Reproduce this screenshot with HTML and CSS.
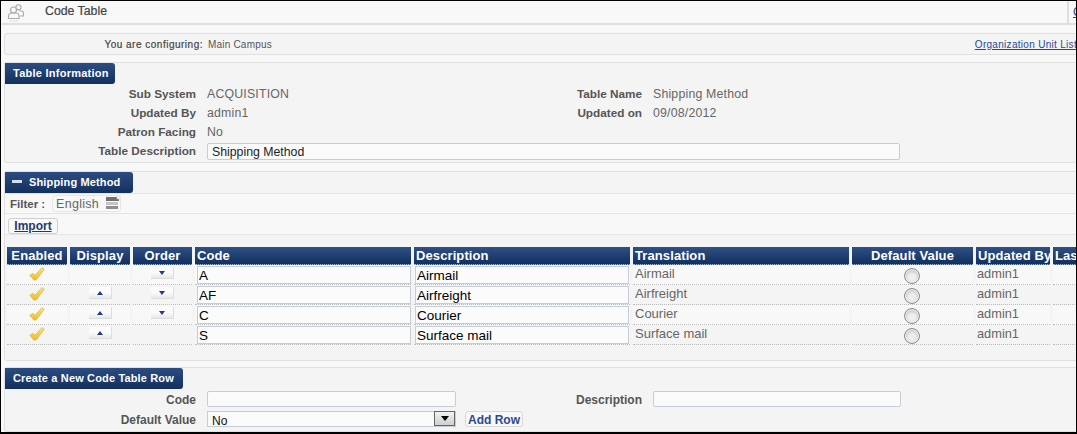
FILE: index.html
```html
<!DOCTYPE html>
<html lang="en">
<head>
<meta charset="utf-8">
<title>Code Table</title>
<link rel="stylesheet" href="styles.css">
</head>
<body>
<svg class="defs" width="0" height="0" aria-hidden="true">
  <defs>
    <linearGradient id="checkFill" x1="0" y1="0" x2="0" y2="1">
      <stop offset="0" stop-color="#fbe66a"/>
      <stop offset="1" stop-color="#eeb92a"/>
    </linearGradient>
    <symbol id="check" viewBox="0 0 16 14">
      <path d="M.7 8.300 3.800 6.300 6 8.300 12.800.7 15.300 2.300 7.300 12.800 5 13.300z" fill="url(#checkFill)" stroke="#d3ad45" stroke-width=".6"/>
    </symbol>
  </defs>
</svg>
<div class="frame">
  <header class="topbar">
    <svg class="top-icon" width="17" height="20" viewBox="0 0 17 20" fill="none" stroke="#aaa" stroke-width="1.100">
      <circle cx="6.500" cy="7" r="3"/><circle cx="11.500" cy="4.300" r="2.600"/>
      <path d="M1.500 15.500v-2.500c0-2 2-3 3-3h4.500c1 0 3 1 3 3v2.500z"/>
      <path d="M12.500 8h2c1 0 2 1 2 2.500V13h-3.500"/>
      <path d="M2.500 18h9" stroke="#e2e2e2"/>
    </svg>
    <h1 class="top-title">Code Table</h1>
    <div class="top-right"><a class="link" href="#">Organization</a></div>
  </header>

  <div class="config">
    <span class="config-label">You are configuring:</span>
    <span class="config-value">Main Campus</span>
    <a class="link config-link" href="#">Organization Unit List</a>
  </div>

  <section class="section section-info">
    <h2 class="bar bar-info">Table Information</h2>
    <div class="form">
      <span class="label">Sub System</span><span class="value">ACQUISITION</span>
      <span class="label">Table Name</span><span class="value">Shipping Method</span>
      <span class="label">Updated By</span><span class="value">admin1</span>
      <span class="label">Updated on</span><span class="value">09/08/2012</span>
      <span class="label">Patron Facing</span><span class="value">No</span>
      <span></span><span></span>
      <span class="label">Table Description</span>
      <input class="field field-wide" type="text" value="Shipping Method">
    </div>
  </section>

  <section class="section section-table">
    <h2 class="bar bar-ship"><span class="minus"></span>Shipping Method</h2>
    <div class="filter">
      <span class="filter-label">Filter :</span>
      <span class="filter-box">English
        <svg class="filter-icon" width="14" height="15" viewBox="0 0 14 15">
          <rect x="0" y="1" width="13" height="4" fill="#6f6f6f"/>
          <rect x="0" y="6" width="12" height="3" fill="#c4c4c4"/>
          <rect x="0" y="10" width="12" height="3" fill="#8f8f8f"/>
          <rect x="11" y="0" width="3" height="3" fill="#fff" stroke="#bbb" stroke-width=".5"/>
        </svg>
      </span>
    </div>
    <div class="import-row"><button class="btn btn-import" type="button">Import</button></div>

    <div class="grid head">
      <div class="th center">Enabled</div>
      <div class="th center">Display</div>
      <div class="th center">Order</div>
      <div class="th">Code</div>
      <div class="th">Description</div>
      <div class="th">Translation</div>
      <div class="th center">Default Value</div>
      <div class="th">Updated By</div>
      <div class="th">Last Updated</div>
    </div>

    <div class="grid row">
      <div class="td center"><svg class="check" width="16" height="14"><use href="#check"/></svg></div>
      <div class="td"></div>
      <div class="td center"><button class="arrow" type="button"><span class="tri-down"></span></button></div>
      <div class="td"><input class="cell-input" type="text" value="A"></div>
      <div class="td td-desc"><input class="cell-input" type="text" value="Airmail"></div>
      <div class="td text">Airmail</div>
      <div class="td center"><span class="radio"></span></div>
      <div class="td text td-user">admin1</div>
      <div class="td"></div>
    </div>
    <div class="grid row alt">
      <div class="td center"><svg class="check" width="16" height="14"><use href="#check"/></svg></div>
      <div class="td center"><button class="arrow" type="button"><span class="tri-up"></span></button></div>
      <div class="td center"><button class="arrow" type="button"><span class="tri-down"></span></button></div>
      <div class="td"><input class="cell-input" type="text" value="AF"></div>
      <div class="td td-desc"><input class="cell-input" type="text" value="Airfreight"></div>
      <div class="td text">Airfreight</div>
      <div class="td center"><span class="radio"></span></div>
      <div class="td text td-user">admin1</div>
      <div class="td"></div>
    </div>
    <div class="grid row">
      <div class="td center"><svg class="check" width="16" height="14"><use href="#check"/></svg></div>
      <div class="td center"><button class="arrow" type="button"><span class="tri-up"></span></button></div>
      <div class="td center"><button class="arrow" type="button"><span class="tri-down"></span></button></div>
      <div class="td"><input class="cell-input" type="text" value="C"></div>
      <div class="td td-desc"><input class="cell-input" type="text" value="Courier"></div>
      <div class="td text">Courier</div>
      <div class="td center"><span class="radio"></span></div>
      <div class="td text td-user">admin1</div>
      <div class="td"></div>
    </div>
    <div class="grid row alt">
      <div class="td center"><svg class="check" width="16" height="14"><use href="#check"/></svg></div>
      <div class="td center"><button class="arrow" type="button"><span class="tri-up"></span></button></div>
      <div class="td"></div>
      <div class="td"><input class="cell-input" type="text" value="S"></div>
      <div class="td td-desc"><input class="cell-input" type="text" value="Surface mail"></div>
      <div class="td text">Surface mail</div>
      <div class="td center"><span class="radio"></span></div>
      <div class="td text td-user">admin1</div>
      <div class="td"></div>
    </div>
  </section>

  <section class="section section-new">
    <h2 class="bar bar-new">Create a New Code Table Row</h2>
    <div class="form form-new">
      <span class="label">Code</span><input class="field" type="text">
      <span class="label">Description</span><input class="field" type="text">
      <span class="label">Default Value</span>
      <div class="select-line">
        <div class="select"><span>No</span><span class="select-btn"><span class="tri-black"></span></span></div>
        <button class="btn btn-add" type="button">Add Row</button>
      </div>
    </div>
  </section>
</div>
</body>
</html>
```

FILE: styles.css
```css
* { box-sizing: border-box; }
html, body { margin: 0; padding: 0; }
body { font-family: "Liberation Sans", Arial, sans-serif; background: #f8f8f8; }
.defs { display: block; height: 0; }

.frame {
  width: 1077px; height: 434px; overflow: hidden;
  border-top: 1px solid #000; border-left: 1px solid #000;
  border-right: 1px solid #000; border-bottom: 2px solid #000;
  background: #f8f8f8;
}

.topbar {
  height: 24px; display: flex; align-items: center;
  border-bottom: 2px solid #dfdfdf; padding-left: 6px;
}
.top-icon { flex: none; margin-top: 2px; }
.top-title { margin: 0 0 3px 21px; font-size: 12.300px; font-weight: normal; color: #444; -webkit-text-stroke: .2px #444; }
.top-right {
  margin-left: auto; width: 9px; height: 22px; border-left: 2px solid #dfdfdf;
  padding-left: 4px; overflow: hidden; font-size: 12px; line-height: 22px; white-space: nowrap;
}
.link { color: #1f4a94; text-decoration: underline; }

.config, .section {
  background-color: #f4f4f4;
  background-image: repeating-conic-gradient(#f0f0f0 0 25%, #f8f8f8 0 50%);
  background-size: 2px 2px;
}

.config {
  margin: 8px -20px 0 3px; height: 22px; display: flex; align-items: center;
  border: 1px solid #dfdfdf; border-radius: 3px; font-size: 10px;
  padding-left: 96px; padding-right: 18px; color: #555;
}
.config-label { width: 102px; text-align: right; letter-spacing: .5px; color: #444; white-space: nowrap; -webkit-text-stroke: .2px #444; }
.config-value { margin-left: 5px; color: #555; letter-spacing: .2px; }
.config-link { margin-left: auto; letter-spacing: .3px; }

.section {
  margin: 8px -20px 0 3px; border: 1px solid #e0e0e0; border-radius: 3px;
}
.section-info { margin-top: 7px; }
.bar {
  margin: 0; height: 21px; display: inline-flex; align-items: center; padding-bottom: 2px;
  background: linear-gradient(#2c4c82, #12305f); color: #fff;
  font-size: 11px; font-weight: bold; letter-spacing: .25px;
  border-radius: 0 3px 3px 0; white-space: nowrap; vertical-align: top;
}
.bar-info { width: 110px; padding-left: 8px; }
.bar-ship { width: 128px; padding-left: 7px; letter-spacing: .15px; }
.bar-new { width: 178px; padding-left: 8px; letter-spacing: .15px; }
.minus { width: 10px; height: 3px; background: #d8dde6; margin-right: 7px; }

.form {
  display: grid; grid-template-columns: 191px 249px 175px 248px; column-gap: 11px;
  grid-auto-rows: 19px; align-items: center; padding-bottom: 2px;
}
.label { text-align: right; font-size: 11.750px; font-weight: bold; color: #555; white-space: nowrap; }
.value { font-size: 12.300px; letter-spacing: .2px; color: #666; white-space: nowrap; }
.field {
  height: 17px; margin: 0; padding: 0 4px; background: #fafafa;
  border: 1px solid #c4cedb; border-radius: 2px; font: 12.300px "Liberation Sans", Arial, sans-serif; color: #222; width: 100%;
  align-self: end;
}
.field-wide { grid-column: 2 / span 3; width: 693px; }

.section-table { height: 190px; }
.filter {
  height: 21px; display: flex; align-items: center; padding-left: 5px;
  background: #f8f8f8; border-top: 1px solid #e4e4e4; border-bottom: 1px solid #e4e4e4;
}
.filter-label { width: 38px; font-size: 11.500px; font-weight: bold; color: #555; white-space: nowrap; }
.filter-box {
  margin-left: 4px; width: 69px; height: 17px; display: flex; align-items: center;
  padding-left: 3px; font-size: 12.500px; color: #666; letter-spacing: .3px;
  border: 1px solid #e6e6e6; border-radius: 3px; position: relative;
}
.filter-icon { position: absolute; right: 0; top: 0; }
.import-row {
  height: 21px; padding: 2px 0 0 3px; background: #f8f8f8; border-bottom: 1px solid #e4e4e4;
}
.btn {
  font: bold 12px "Liberation Sans", Arial, sans-serif; color: #2a4a8c; background: #f8f8f8;
  border: 1px solid #cfcfcf; border-radius: 3px; padding: 0; margin: 0;
}
.btn-import { width: 50px; height: 16px; line-height: 14px; text-decoration: underline; color: #1f3a6e; overflow: hidden; }

.grid {
  display: grid; grid-template-columns: 60px 60px 59px 216px 216px 216px 121px 74px 60px;
  column-gap: 3px; padding-left: 2px;
}
.head { margin-top: 12px; height: 18px; }
.th {
  background: linear-gradient(#2f4f86, #12305f); color: #fff; font-size: 13px; font-weight: bold;
  padding-left: 2px; line-height: 17px; height: 18px; letter-spacing: .1px; white-space: nowrap; overflow: hidden;
  border-bottom: 1px dotted #9fb2d0;
}
.th.center { text-align: center; padding-left: 0; }
.row { height: 20px; }
.td {
  height: 20px; border-bottom: 1px dotted #bdbdbd; background: #f8f8f8;
  display: flex; align-items: flex-start; padding-top: 1px;
}
.row.alt .td {
  background-color: #f4f4f4;
  background-image: repeating-conic-gradient(#f0f0f0 0 25%, #f8f8f8 0 50%);
  background-size: 2px 2px;
}
.td.center { justify-content: center; }
.td.text { font-size: 13px; color: #666; padding: 0 0 0 2px; line-height: 17px; white-space: nowrap; }
.td.td-user { padding-left: 1px; font-size: 12.800px; }
.td .check { margin-top: 1px; margin-left: -1px; }
.cell-input {
  width: 214px; height: 18px; margin: 0 0 0 2px; padding: 0 1px;
  border: 1px solid #c4cedb; background: #fbfbfb;
  font: 13.500px "Liberation Sans", Arial, sans-serif; color: #000;
}
.td-desc .cell-input { margin-left: 1px; }

.arrow {
  width: 23px; height: 12px; padding: 0; margin: 1px 0 0; display: flex; align-items: center; justify-content: center;
  border: 0; border-right: 1px solid #ddd; border-bottom: 1px solid #ddd;
  background: linear-gradient(#fbfbfb 50%, #e8e8e8);
}
.tri-up, .tri-down { width: 0; height: 0; border-left: 3.500px solid transparent; border-right: 3.500px solid transparent; }
.tri-up { border-bottom: 4px solid #22388a; }
.tri-down { border-top: 4px solid #22388a; }

.radio {
  width: 16px; height: 16px; margin-top: 2px; margin-left: -1px; border-radius: 50%; border: 1px solid #8f8f8f;
  box-shadow: inset 0 0 0 1px #ececec;
  background: radial-gradient(circle at 50% 60%, #eee 0 30%, #c9c9c9 70%, #b4b4b4);
}

.section-new { margin-top: 6px; height: 65px; }
.form-new { grid-auto-rows: 16px; row-gap: 4px; padding: 2px 0 0; }
.form-new .label { padding-top: 1px; line-height: 16px; font-size: 12px; }
.form-new .field { height: 16px; }
.select-line { display: flex; align-items: flex-start; gap: 9px; grid-column: 2 / span 3; }
.select {
  width: 249px; height: 16px; display: flex; align-items: center; justify-content: space-between;
  border: 1px solid #c4cedb; font-size: 12px; color: #111; padding: 3px 0 0 4px; background: #fafafa;
}
.select-btn {
  width: 21px; height: 15px; margin-top: -4px; display: flex; align-items: center; justify-content: center;
  border: 1px solid #666; background: linear-gradient(#f2f2f2, #cfcfcf);
}
.tri-black { width: 0; height: 0; border-left: 4.500px solid transparent; border-right: 4.500px solid transparent; border-top: 5px solid #000; }
.btn-add { width: 58px; height: 16px; line-height: 15px; padding-top: 1px; border-color: #d8d8d8; }
```
